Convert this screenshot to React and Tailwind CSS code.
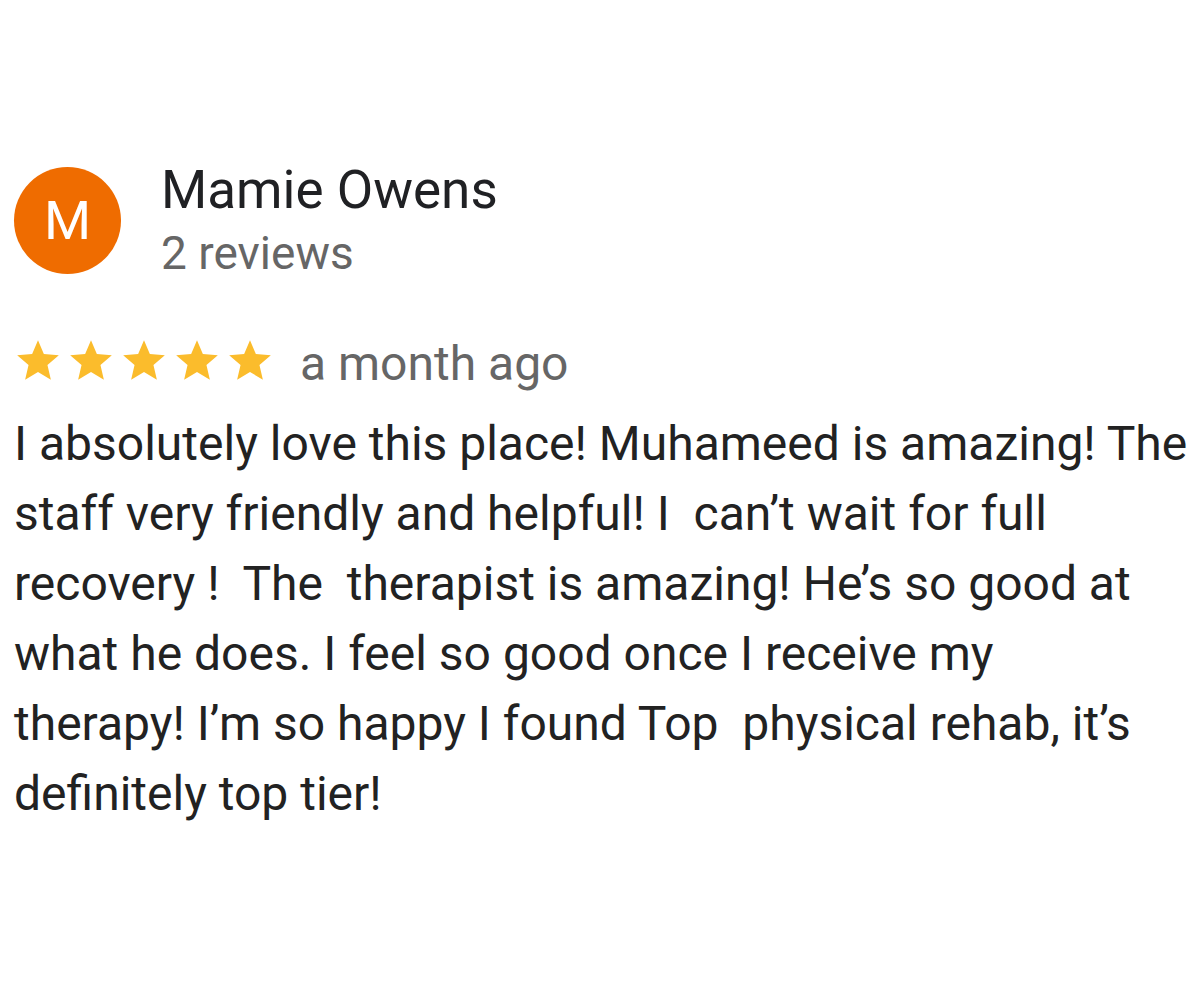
import React from "react";

const lines = [
    "I absolutely love this place! Muhameed is amazing! The",
    "staff very friendly and helpful! I  can\u2019t wait for full",
    "recovery !  The  therapist is amazing! He\u2019s so good at",
    "what he does. I feel so good once I receive my",
    "therapy! I\u2019m so happy I found Top  physical rehab, it\u2019s",
    "definitely top tier!",
];

// Material style filled star
const Star = () => (
    <svg viewBox="0 0 24 24" className="w-[50px] h-[50px]" fill="#fbbc2c">
        <path d="M12 17.27L18.18 21l-1.64-7.03L22 9.24l-7.19-.61L12 2 9.19 8.63 2 9.24l5.46 4.73L5.82 21z" />
    </svg>
);

export default function App() {
    return (
        <div className="w-[1200px] h-[1000px] bg-white font-['Roboto',sans-serif] pl-[14px] pt-[160px]">
            {/* Reviewer */}
            <div className="flex items-start">
                <div className="mt-[7px] w-[107px] h-[107px] rounded-full bg-[#ef6c00] flex items-center justify-center text-white text-[54px] leading-none">
                    M
                </div>
                <div className="ml-[40px] flex flex-col">
                    <span className="text-[53px] leading-[60px] text-[#202124]">Mamie Owens</span>
                    <span className="mt-[7px] text-[46px] leading-[52px] text-[#666666]">2 reviews</span>
                </div>
            </div>

            {/* Rating */}
            <div className="flex items-start mt-[57px]">
                <div className="flex gap-[3px] -ml-[1px]">
                    <Star />
                    <Star />
                    <Star />
                    <Star />
                    <Star />
                </div>
                <span className="ml-[25px] text-[48px] leading-[56px] text-[#666666]">a month ago</span>
            </div>

            {/* Body */}
            <div className="mt-[17px] text-[48px] leading-[70px] text-[#222222]">
                {lines.map((l, i) => (
                    <div key={i} className="whitespace-pre">{l}</div>
                ))}
            </div>
        </div>
    );
}
